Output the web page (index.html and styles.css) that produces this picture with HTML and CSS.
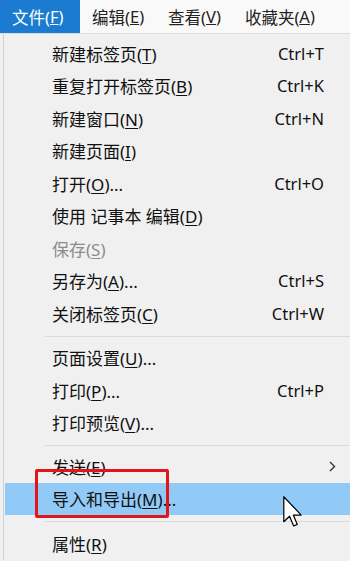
FILE: index.html
```html
<!DOCTYPE html>
<html lang="zh-CN">
<head>
    <meta charset="UTF-8">
    <meta name="viewport" content="width=device-width, initial-scale=1.0">
    <title>文件菜单</title>
    <link rel="stylesheet" href="styles.css">
</head>
<body>

    <!-- 菜单栏 -->
    <div class="menubar">
        <div class="menubar-item active">文件(<u>F</u>)</div>
        <div class="menubar-item">编辑(<u>E</u>)</div>
        <div class="menubar-item">查看(<u>V</u>)</div>
        <div class="menubar-item">收藏夹(<u>A</u>)</div>
    </div>

    <!-- 下拉菜单 -->
    <div class="dropdown">
        <div class="item"><span class="label">新建标签页(<u>T</u>)</span><span class="key">Ctrl+T</span></div>
        <div class="item"><span class="label">重复打开标签页(<u>B</u>)</span><span class="key">Ctrl+K</span></div>
        <div class="item"><span class="label">新建窗口(<u>N</u>)</span><span class="key">Ctrl+N</span></div>
        <div class="item"><span class="label">新建页面(<u>I</u>)</span></div>
        <div class="item"><span class="label">打开(<u>O</u>)...</span><span class="key">Ctrl+O</span></div>
        <div class="item"><span class="label">使用 记事本 编辑(<u>D</u>)</span></div>
        <div class="item disabled"><span class="label">保存(<u>S</u>)</span></div>
        <div class="item"><span class="label">另存为(<u>A</u>)...</span><span class="key">Ctrl+S</span></div>
        <div class="item"><span class="label">关闭标签页(<u>C</u>)</span><span class="key">Ctrl+W</span></div>
        <div class="separator"></div>
        <div class="item"><span class="label">页面设置(<u>U</u>)...</span></div>
        <div class="item"><span class="label">打印(<u>P</u>)...</span><span class="key">Ctrl+P</span></div>
        <div class="item"><span class="label">打印预览(<u>V</u>)...</span></div>
        <div class="separator sep-small"></div>
        <div class="item">
            <span class="label">发送(<u>E</u>)</span>
            <svg class="submenu-arrow" width="7" height="11" viewBox="0 0 7 11">
                <path d="M1 1 L5.5 5.5 L1 10" fill="none" stroke="#333" stroke-width="1.4"/>
            </svg>
        </div>
        <div class="item hover">
            <span class="label">导入和导出(<u>M</u>)...</span>
            <!-- 红框标注 -->
            <div class="mark-box"></div>
            <!-- 鼠标指针 -->
            <svg class="cursor" width="19" height="31" viewBox="0 0 12.5 20.5">
                <path d="M0.5 0.5 L0.5 17 L4.3 13.4 L7 19.8 L9.4 18.8 L6.8 12.6 L12 12.6 Z" fill="#fff" stroke="#000" stroke-width="0.8" stroke-linejoin="round"/>
            </svg>
        </div>
        <div class="separator"></div>
        <div class="item"><span class="label">属性(<u>R</u>)</span></div>
    </div>

</body>
</html>
```

FILE: styles.css
```css
body {
    margin: 0;
    width: 350px;
    height: 561px;
    overflow: hidden;
    background-color: #f0f0f0;
    font-family: "Noto Sans", "Noto Sans CJK SC", sans-serif;
    color: #111;
}
/* Pasek menu */
.menubar {
    display: flex;
    height: 33px;
    background-color: #f9f9f9;
    border-bottom: 1px solid #dcdcdc;
}
.menubar-item {
    display: flex;
    align-items: center;
    padding: 0 12px;
    font-size: 16.5px;
    color: #222;
}
.menubar-item.active {
    width: 56px;
    background-color: #1a7bd0;
    color: white;
}
/* Menu rozwijane */
.dropdown {
    margin-left: 3px;
    padding-top: 3px;
    border-left: 1px solid #cfcfcf;
}
.item {
    position: relative;
    display: flex;
    align-items: center;
    justify-content: space-between;
    height: 32.5px;
    margin-left: 1px;
    padding-left: 47px;
    padding-right: 26px;
    font-size: 17px;
}
.item u {
    text-underline-offset: 2px;
}
.item.disabled {
    color: #8c8c8c;
}
.item.hover {
    background-color: #91c9f7;
}
.key {
    font-size: 16.5px;
}
.submenu-arrow {
    margin-right: -12px;
}
.separator {
    height: 12px;
    margin-left: 41px;
    background: linear-gradient(#dadada, #dadada) no-repeat 0 6px / 100% 1px;
}
.sep-small {
    height: 11px;
}
/* Czerwona ramka */
.mark-box {
    position: absolute;
    left: 30px;
    top: -14px;
    width: 128px;
    height: 43px;
    border: 3.5px solid #e3151c;
    border-radius: 2px;
}
.cursor {
    position: absolute;
    left: 278px;
    top: 13px;
}
```
